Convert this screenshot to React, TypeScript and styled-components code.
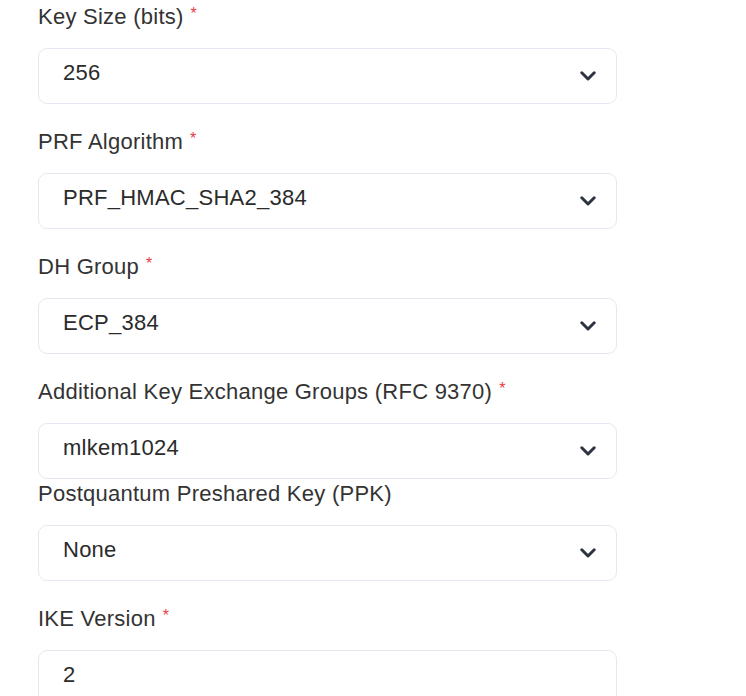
import React from "react";
import styled, { createGlobalStyle } from "styled-components";

const Global = createGlobalStyle`
  html, body { margin: 0; padding: 0; background: #ffffff; }
  body { font-family: "Liberation Sans", Arial, sans-serif; }
`;

const Form = styled.div`
  display: flex;
  flex-direction: column;
  padding: 2px 0 0 38px;
  width: 579px;
`;

const Field = styled.div<{ $tight?: boolean }>`
  display: flex;
  flex-direction: column;
  gap: 16px;
  margin-bottom: ${(p) => (p.$tight ? "0px" : "23px")};
`;

const Label = styled.div`
  display: flex;
  align-items: flex-start;
  font-size: 22px;
  line-height: 30px;
  letter-spacing: 0.25px;
  color: #333333;
  white-space: nowrap;
`;

const Star = styled.span`
  color: #e53e3e;
  font-size: 16px;
  line-height: 20px;
  margin: 2px 0 0 7px;
`;

const Box = styled.div`
  box-sizing: border-box;
  height: 56px;
  display: flex;
  align-items: center;
  justify-content: space-between;
  padding: 0 20px 7px 24px;
  border: 1px solid #e4e9f1;
  border-radius: 9px;
  background: #ffffff;
  font-size: 22px;
  letter-spacing: 0.25px;
  color: #2b2b2b;
`;

const Chevron = styled.svg`
  flex: none;
  margin-top: 7px;
`;

const ChevronIcon = () => (
  <Chevron width="16" height="10" viewBox="0 0 16 10">
    <path
      d="M1.8 1.8 L8 8 L14.2 1.8"
      fill="none"
      stroke="#2d3340"
      strokeWidth="3"
      strokeLinecap="round"
      strokeLinejoin="round"
    />
  </Chevron>
);

type F = { label: string; value: string; required?: boolean; select?: boolean; tight?: boolean };

const fields: F[] = [
  { label: "Key Size (bits)", value: "256", required: true, select: true },
  { label: "PRF Algorithm", value: "PRF_HMAC_SHA2_384", required: true, select: true },
  { label: "DH Group", value: "ECP_384", required: true, select: true },
  {
    label: "Additional Key Exchange Groups (RFC 9370)",
    value: "mlkem1024",
    required: true,
    select: true,
    tight: true,
  },
  { label: "Postquantum Preshared Key (PPK)", value: "None", select: true },
  { label: "IKE Version", value: "2", required: true },
];

export default function App() {
  return (
    <>
      <Global />
      <Form>
        {fields.map((f) => (
          <Field key={f.label} $tight={f.tight}>
            <Label>
              {f.label}
              {f.required && <Star>*</Star>}
            </Label>
            <Box>
              <span>{f.value}</span>
              {f.select && <ChevronIcon />}
            </Box>
          </Field>
        ))}
      </Form>
    </>
  );
}
